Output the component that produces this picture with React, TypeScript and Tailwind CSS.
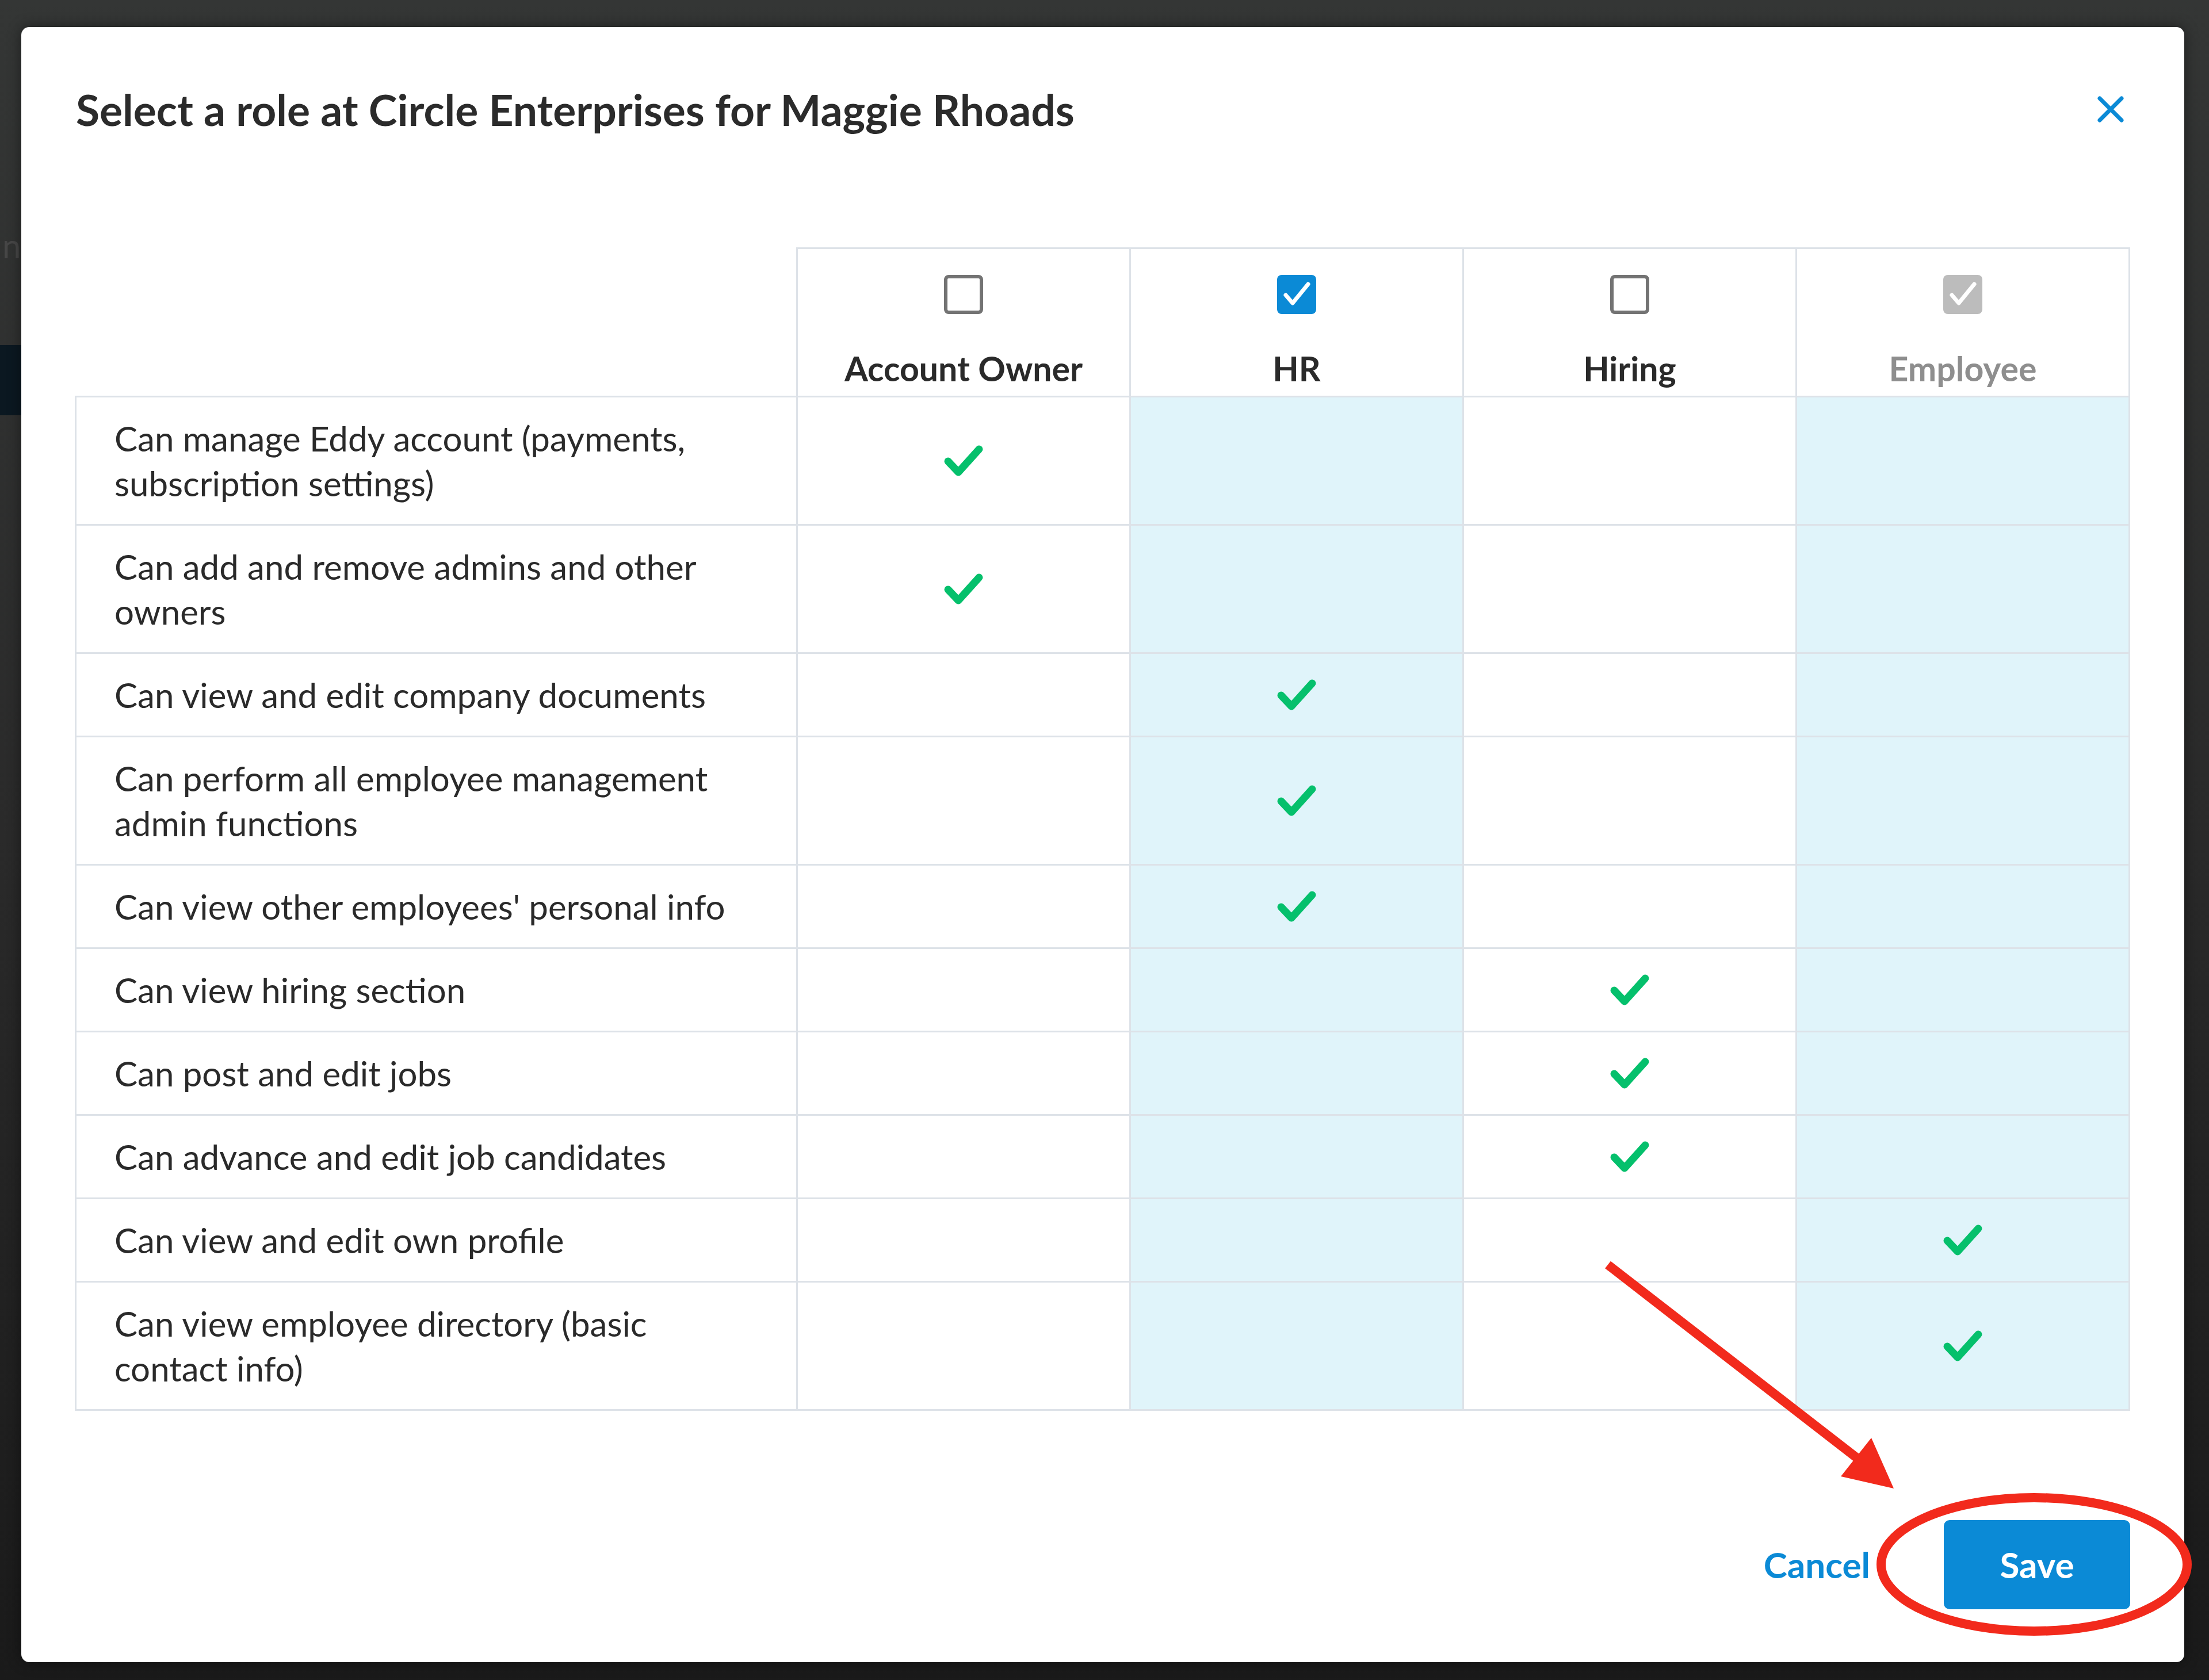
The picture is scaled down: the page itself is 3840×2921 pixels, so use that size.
import React from "react";

type RoleState = "empty" | "checked" | "locked";

interface Role {
  name: string;
  state: RoleState;
  tinted: boolean;
}

interface Permission {
  label: string;
  roles: number[];
}

const roles: Role[] = [
  { name: "Account Owner", state: "empty", tinted: false },
  { name: "HR", state: "checked", tinted: true },
  { name: "Hiring", state: "empty", tinted: false },
  { name: "Employee", state: "locked", tinted: true },
];

const permissions: Permission[] = [
  { label: "Can manage Eddy account (payments, subscription settings)", roles: [0] },
  { label: "Can add and remove admins and other owners", roles: [0] },
  { label: "Can view and edit company documents", roles: [1] },
  { label: "Can perform all employee management admin functions", roles: [1] },
  { label: "Can view other employees' personal info", roles: [1] },
  { label: "Can view hiring section", roles: [2] },
  { label: "Can post and edit jobs", roles: [2] },
  { label: "Can advance and edit job candidates", roles: [2] },
  { label: "Can view and edit own profile", roles: [3] },
  { label: "Can view employee directory (basic contact info)", roles: [3] },
];

function GreenCheck() {
  return (
    <svg width="68" height="54" viewBox="0 0 68 54" className="inline-block align-middle">
      <path
        d="M7 28 L25 47 L61 7"
        fill="none"
        stroke="#05c06c"
        strokeWidth="13"
        strokeLinecap="round"
        strokeLinejoin="round"
      />
    </svg>
  );
}

function RoleCheckbox({ state }: { state: RoleState }) {
  if (state === "empty") {
    return <div className="mx-auto w-[68px] h-[68px] rounded-[8px] border-[6px] border-[#737373] bg-white" />;
  }
  const bg = state === "checked" ? "bg-[#0b8ad6]" : "bg-[#bcbcbc]";
  return (
    <div className={`mx-auto w-[68px] h-[68px] rounded-[8px] ${bg}`}>
      <svg width="68" height="68" viewBox="0 0 68 68">
        <path
          d="M15 35 L27 49 L54 16"
          fill="none"
          stroke="#ffffff"
          strokeWidth="7"
          strokeLinecap="round"
          strokeLinejoin="round"
        />
      </svg>
    </div>
  );
}

export default function App() {
  return (
    <div className="relative w-[3840px] h-[2921px] overflow-hidden bg-gradient-to-b from-[#343635] via-[#2a2a2a] to-[#1a1a1a] font-['Lato',sans-serif]">
      {/* dimmed page behind the dialog */}
      <div className="w-[37px] pt-[397px]">
        <div className="pl-[4px] text-[58px] leading-[60px] text-[#474747]">n</div>
        <div className="mt-[143px] h-[122px] bg-[#0b1821]" />
      </div>

      {/* role dialog */}
      <div className="absolute left-[37px] top-[47px] w-[3760px] h-[2843px] rounded-[14px] bg-white pl-[93px] pr-[94px] pt-[100px] shadow-[0_0_24px_rgba(0,0,0,0.45)]">
        <div className="flex items-center justify-between h-[86px]">
          <h1 className="ml-[2px] text-[75px] leading-[86px] font-bold text-[#2b2b2b]">
            Select a role at Circle Enterprises for Maggie Rhoads
          </h1>
          <button className="mr-[10px]">
            <svg width="48" height="48" viewBox="0 0 48 48">
              <path d="M5 5 L43 43 M43 5 L5 43" stroke="#0b8ad6" strokeWidth="7" strokeLinecap="round" />
            </svg>
          </button>
        </div>

        <table className="mt-[197px] w-full table-fixed border-collapse text-[#2a2a2a]">
          <colgroup>
            <col className="w-[1254px]" />
            <col />
            <col />
            <col />
            <col />
          </colgroup>
          <thead>
            <tr>
              <th className="border-0" />
              {roles.map((role) => (
                <th
                  key={role.name}
                  className="border-[3px] border-[#dde2e8] pt-[45px] pb-[8px] align-top font-bold"
                >
                  <RoleCheckbox state={role.state} />
                  <div
                    className={`mt-[56px] text-[59px] leading-[78px] ${
                      role.state === "locked" ? "text-[#8e8e8e]" : "text-[#2a2a2a]"
                    }`}
                  >
                    {role.name}
                  </div>
                </th>
              ))}
            </tr>
          </thead>
          <tbody>
            {permissions.map((perm) => (
              <tr key={perm.label}>
                <td className="border-[3px] border-[#dde2e8] pl-[66px] pr-[110px] py-[32px] text-[60px] leading-[78px]">
                  {perm.label}
                </td>
                {roles.map((role, i) => (
                  <td
                    key={role.name}
                    className={`border-[3px] border-[#dde2e8] text-center align-middle ${
                      role.tinted ? "bg-[#e0f4fa]" : "bg-white"
                    }`}
                  >
                    {perm.roles.includes(i) && <GreenCheck />}
                  </td>
                ))}
              </tr>
            ))}
          </tbody>
        </table>

        <div className="mt-[190px] flex items-center justify-end gap-[128px]">
          <button className="text-[62px] font-bold text-[#0b8ad6]">Cancel</button>
          <button className="w-[324px] h-[155px] rounded-[10px] bg-[#0b8ad6] text-[62px] font-bold text-white">
            Save
          </button>
        </div>
      </div>

      {/* red callout drawn over the dialog */}
      <svg
        className="absolute inset-0 pointer-events-none"
        width="3840"
        height="2921"
        viewBox="0 0 3840 2921"
      >
        <line x1="2795" y1="2199" x2="3232" y2="2538" stroke="#f22a1c" strokeWidth="16" />
        <polygon points="3292,2588 3200,2567 3253,2500" fill="#f22a1c" />
        <ellipse cx="3536" cy="2720" rx="266" ry="116" fill="none" stroke="#f22a1c" strokeWidth="16" />
      </svg>
    </div>
  );
}
